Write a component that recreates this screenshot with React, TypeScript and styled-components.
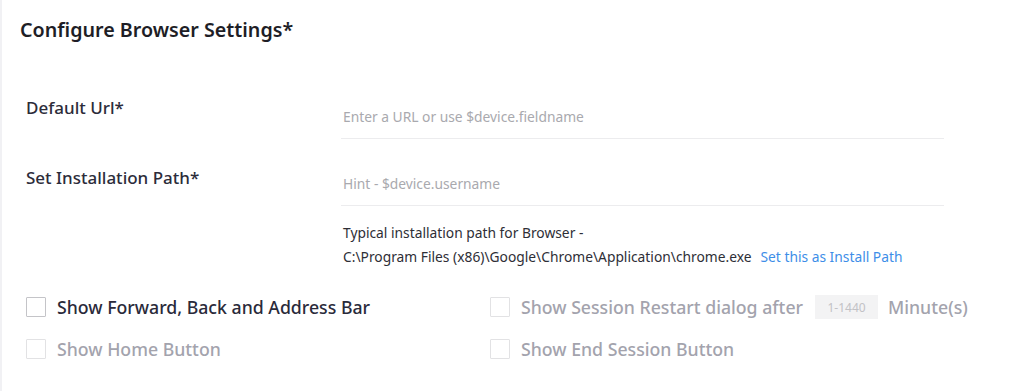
import React from "react";
import styled, { createGlobalStyle } from "styled-components";

const Global = createGlobalStyle`
  html, body { margin: 0; padding: 0; background: #ffffff; }
  body { font-family: "Noto Sans", "Open Sans", sans-serif; color: #22222e; }
  * { box-sizing: border-box; }
`;

const Page = styled.div`
  width: 1024px;
  height: 391px;
  overflow: hidden;
  border-left: 2px solid #f1f1f4;
  padding: 17px 0 0 18px;
`;

const Title = styled.h2`
  margin: 0;
  font-size: 19.7px;
  font-weight: 600;
  line-height: 26px;
  color: #1e1e26;
`;

const Form = styled.div`
  display: grid;
  grid-template-columns: 315px 603px;
  grid-template-rows: 49px auto;
  row-gap: 18px;
  margin: 47px 0 0 6px;
`;

const Label = styled.div<{ $top: number }>`
  font-size: 17px;
  font-weight: 500;
  line-height: 22px;
  color: #2c2c3a;
  padding-top: ${(p) => p.$top}px;
`;

const Field = styled.div`
  display: flex;
  flex-direction: column;
`;

const Input = styled.input`
  border: none;
  border-bottom: 1.5px solid #ececee;
  outline: none;
  height: 49px;
  padding: 4px 0 0 2px;
  font-family: inherit;
  font-size: 13.8px;
  color: #333;
  background: transparent;
  &::placeholder { color: #a9a9ae; }
`;

const Hint = styled.div`
  margin-top: 15px;
  font-size: 13.8px;
  line-height: 24px;
  color: #2e2e36;
  padding-left: 2px;
`;

const Link = styled.a`
  color: #3d8ee8;
  margin-left: 9px;
  cursor: pointer;
`;

const Options = styled.div`
  display: grid;
  grid-template-columns: 464px auto;
  row-gap: 10px;
  margin: 22px 0 0 6px;
`;

const Option = styled.label<{ $disabled?: boolean }>`
  display: flex;
  align-items: center;
  gap: 11px;
  height: 32px;
  font-size: 17.7px;
  font-weight: 500;
  color: ${(p) => (p.$disabled ? "#a3a3ad" : "#2a2a3a")};
`;

const Box = styled.span<{ $disabled?: boolean }>`
  width: 20px;
  height: 20px;
  flex: none;
  border: 1.5px solid ${(p) => (p.$disabled ? "#e2e2e4" : "#c4c4c8")};
  border-radius: 1px;
  background: #fff;
`;

const Minutes = styled.span`
  display: inline-flex;
  align-items: center;
  justify-content: center;
  width: 63px;
  height: 24px;
  margin: 0 -1px 0 1px;
  background: #f3f3f4;
  color: #c2c2c6;
  font-size: 12px;
  font-weight: 400;
`;

export default function App() {
  return (
    <>
      <Global />
      <Page>
        <Title>Configure Browser Settings*</Title>
        <Form>
          <Label $top={7}>Default Url*</Label>
          <Field>
            <Input placeholder="Enter a URL or use $device.fieldname" />
          </Field>
          <Label $top={10}>Set Installation Path*</Label>
          <Field>
            <Input placeholder="Hint - $device.username" />
            <Hint>
              Typical installation path for Browser -<br />
              C:\Program Files (x86)\Google\Chrome\Application\chrome.exe
              <Link>Set this as Install Path</Link>
            </Hint>
          </Field>
        </Form>
        <Options>
          <Option>
            <Box />
            Show Forward, Back and Address Bar
          </Option>
          <Option $disabled>
            <Box $disabled />
            Show Session Restart dialog after
            <Minutes>1-1440</Minutes>
            Minute(s)
          </Option>
          <Option $disabled>
            <Box $disabled />
            Show Home Button
          </Option>
          <Option $disabled>
            <Box $disabled />
            Show End Session Button
          </Option>
        </Options>
      </Page>
    </>
  );
}
